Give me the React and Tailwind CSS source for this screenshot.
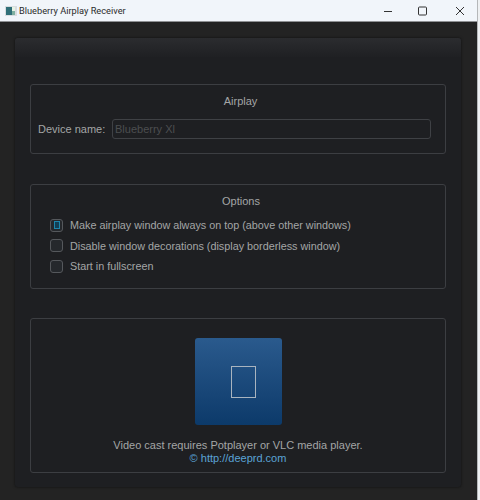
import React from "react";

function GroupBox({ className, children }) {
  return (
    <div className={`rounded-[3px] border border-[#3c3e42] ${className}`}>
      {children}
    </div>
  );
}

function Check({ checked, label }) {
  return (
    <label className="flex items-center h-[20.5px] gap-[7px]">
      <span className="flex items-center justify-center w-[11px] h-[11px] rounded-[3px] border border-[#55585c] bg-[#25282c] box-content">
        {checked && (
          <span className="block w-[6px] h-[8px] bg-[#123f55] border border-[#1c86ad]" />
        )}
      </span>
      <span className="text-[10.8px]">{label}</span>
    </label>
  );
}

export default function App() {
  return (
    <div className="w-[480px] h-[500px] overflow-hidden flex bg-white font-['Liberation_Sans',sans-serif] text-[11px] text-[#a4a6a6]">
      <div className="w-[477px] h-full flex flex-col shrink-0">
        {/* Title bar */}
        <div className="h-[22px] shrink-0 flex items-center bg-[#f1f5fa] border-b border-[#8f9194] text-[#2b2b2b]">
          <svg className="ml-[5px] mr-[2px]" width="12" height="10" viewBox="0 0 12 10">
            <rect x="0" y="0" width="12" height="10" fill="#d8dde0" />
            <rect x="1" y="1" width="6" height="8" fill="#2f6f78" />
            <rect x="7" y="1" width="3" height="4" fill="#e8f3e4" />
            <rect x="7" y="5" width="3" height="4" fill="#7fb0a0" />
          </svg>
          <span className="font-['Roboto',sans-serif] text-[9.25px] mt-[1px]">Blueberry Airplay Receiver</span>
          <div className="ml-auto flex items-center mr-[12px]">
            <svg width="10" height="10" viewBox="0 0 10 10" className="mr-[25px]">
              <path d="M1 5.5H9" stroke="#333" strokeWidth="1" />
            </svg>
            <svg width="10" height="10" viewBox="0 0 10 10" className="mr-[27px]">
              <rect x="0.5" y="1" width="8" height="8" rx="1" fill="none" stroke="#333" strokeWidth="1" />
            </svg>
            <svg width="10" height="10" viewBox="0 0 10 10">
              <path d="M1 1L9 9M9 1L1 9" stroke="#333" strokeWidth="1" />
            </svg>
          </div>
        </div>

        {/* Window body */}
        <div className="flex-1 bg-[#232323] px-[15px] pt-[16px]">
          <div className="w-[446px] h-[449px] rounded-[3px] bg-[#1e1f22] shadow-[0_0_3px_rgba(0,0,0,0.6)]">
            <div className="h-[19px] rounded-t-[3px] bg-gradient-to-b from-[#2b2c2f] to-[#1f2023]" />

            <div className="px-[15px] pt-[27px] flex flex-col">
              <GroupBox className="h-[70px] flex flex-col items-center pt-[10px] pl-[7px] pr-[14px]">
                <div className="h-[13px] leading-[13px] ml-[12px]">Airplay</div>
                <div className="w-full flex items-center mt-[11px]">
                  <span className="w-[74px] shrink-0">Device name:</span>
                  <div className="flex-1 h-[20px] leading-[18px] rounded-[3px] border border-[#3f4145] bg-[#1e1f22] px-[2px] text-[#4c4e50]">
                    Blueberry Xl
                  </div>
                </div>
              </GroupBox>

              <GroupBox className="h-[105px] mt-[30px] flex flex-col pt-[10px]">
                <div className="h-[13px] leading-[13px] text-center pl-[6px]">Options</div>
                <div className="flex flex-col mt-[7px] pl-[19px]">
                  <Check checked label="Make airplay window always on top (above other windows)" />
                  <Check label="Disable window decorations (display borderless window)" />
                  <Check label="Start in fullscreen" />
                </div>
              </GroupBox>

              <GroupBox className="h-[155px] mt-[29px] flex flex-col items-center pt-[19px]">
                <div className="w-[87px] h-[87px] rounded-[3px] bg-gradient-to-b from-[#2a5a8d] to-[#0c3a6a] flex items-center justify-center">
                  <span className="block ml-[11px] w-[25px] h-[32px] border border-[#a9b4bf]" />
                </div>
                <div className="mt-[14px] leading-[13px]">Video cast requires Potplayer or VLC media player.</div>
                <div className="leading-[13px] text-[#5ba3d6]">© http://deeprd.com</div>
              </GroupBox>
            </div>
          </div>
        </div>
      </div>
      <div className="flex-1 bg-[#eef0f2] border-l border-[#b5b7b9]" />
    </div>
  );
}
